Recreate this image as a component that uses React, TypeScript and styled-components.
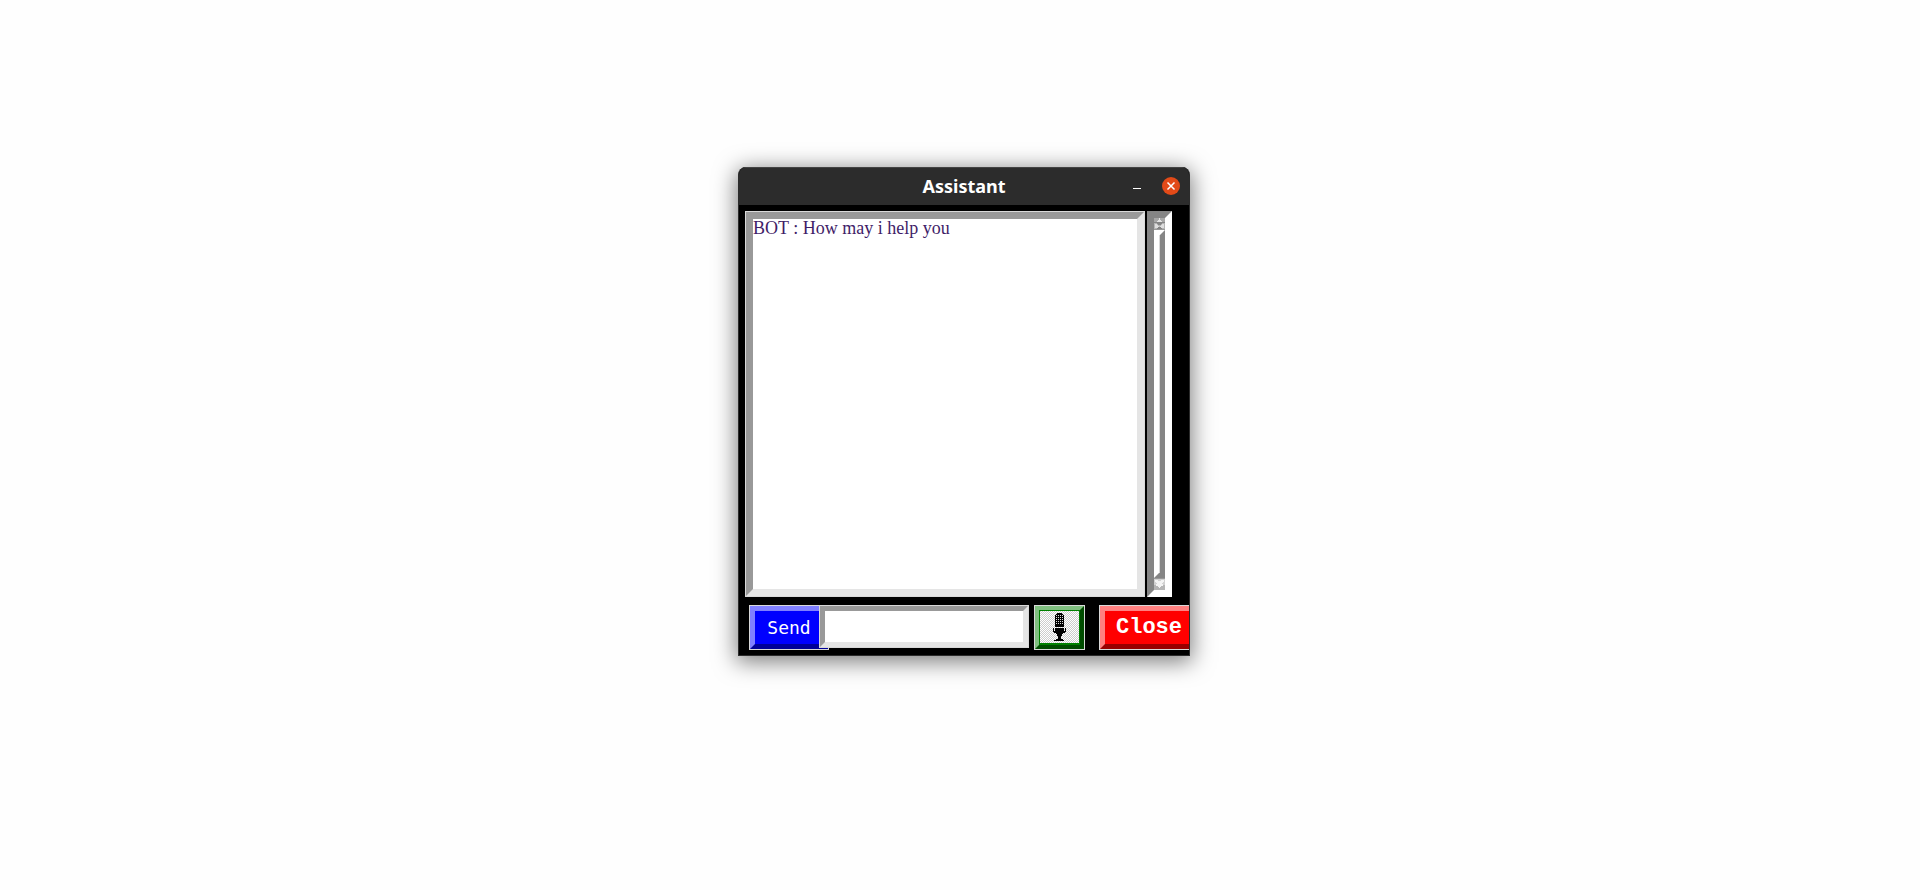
import React, { useState } from "react";
import styled, { createGlobalStyle } from "styled-components";

const GlobalStyle = createGlobalStyle`
  body {
    margin: 0;
    background: #fefefe;
  }
  *, *::before, *::after {
    box-sizing: border-box;
  }
`;

const HIGHLIGHT = "#d9d9d9";

const Desktop = styled.main`
  display: flex;
  justify-content: center;
  padding: 167px 0 40px 8px;
`;

const Window = styled.section`
  width: 452px;
  overflow: hidden;
  border: 1px solid #2c2c2c;
  border-top: 0;
  border-radius: 8px 8px 0 0;
  background: #000;
  box-shadow: 0 4px 22px 2px rgba(0, 0, 0, 0.5);
`;

const TitleBar = styled.header`
  display: grid;
  grid-template-columns: 1fr auto 1fr;
  align-items: center;
  height: 38px;
  padding: 0 9px;
  background: #2c2c2c;
  box-shadow: inset 0 1px 0 #444;
`;

const Title = styled.h1`
  grid-column: 2;
  margin: 0;
  color: #fff;
  font: 700 18px/24px "Noto Sans", "Open Sans", sans-serif;
`;

const WindowControls = styled.div`
  display: flex;
  justify-content: flex-end;
  gap: 16px;
`;

const ControlButton = styled.button<{ $color?: string }>`
  width: 18px;
  height: 18px;
  padding: 0;
  border: 0;
  border-radius: 50%;
  background: ${(p) => p.$color ?? "transparent"};
  svg {
    display: block;
  }
`;

const Content = styled.div`
  display: flex;
  flex-direction: column;
  gap: 8px;
  padding: 6px 0 5px 6px;
`;

const ChatRow = styled.div`
  display: flex;
  gap: 2px;
`;

const ChatFrame = styled.div`
  width: 400px;
  height: 386px;
  padding: 1px;
  background: ${HIGHLIGHT};
`;

const ChatLog = styled.div`
  height: 100%;
  border: 7px solid;
  border-color: #999 #e5e5e5 #e5e5e5 #999;
  background: #fff;
  color: #3f1d68;
  font: 400 18px/18px "Liberation Serif", serif;
`;

const Message = styled.p`
  margin: 0;
`;

const ScrollTrack = styled.div`
  display: flex;
  flex-direction: column;
  width: 25px;
  border: 7px solid;
  border-color: #858585 #fff #fff #858585;
  background: #c3c3c3;
`;

const ScrollArrow = styled.button`
  height: 12px;
  padding: 0;
  border: 0;
  background: #a8a8a8;
  svg {
    display: block;
  }
`;

const ScrollThumb = styled.div`
  flex: 1;
  border: 5px solid;
  border-color: #fff #858585 #858585 #fff;
  background: #d9d9d9;
`;

const ActionRow = styled.form`
  display: flex;
  align-items: flex-start;
  padding-left: 4px;
`;

const ButtonFrame = styled.div<{ $width: number }>`
  flex: none;
  width: ${(p) => p.$width}px;
  height: 45px;
  padding: 1px;
  background: ${HIGHLIGHT};
`;

const BevelButton = styled.button<{ $face: string; $light: string; $dark: string; $bevel: number }>`
  display: block;
  width: 100%;
  height: 100%;
  padding: 0;
  border: ${(p) => p.$bevel}px solid;
  border-color: ${(p) => `${p.$light} ${p.$dark} ${p.$dark} ${p.$light}`};
  background: ${(p) => p.$face};
  color: #fff;
`;

const SendButton = styled(BevelButton)`
  font: 400 18px/24px "DejaVu Sans Mono", monospace;
`;

const CloseButton = styled(BevelButton)`
  font: 700 22px/24px "Liberation Mono", monospace;
`;

const MicButton = styled(BevelButton)`
  padding: 1px 1px 2px;
  svg {
    display: block;
  }
`;

const EntryFrame = styled.div`
  position: relative;
  flex: none;
  width: 210px;
  height: 43px;
  margin: 0 5px 0 -10px;
  padding: 1px;
  background: ${HIGHLIGHT};
`;

const Entry = styled.input`
  display: block;
  width: 100%;
  height: 100%;
  padding: 0 2px;
  border: 5px solid;
  border-color: #999 #e5e5e5 #e5e5e5 #999;
  border-radius: 0;
  outline: 0;
  background: #fff;
  color: #3f1d68;
  font: 400 18px/24px "Liberation Serif", serif;
`;

const CloseSlot = styled.div`
  flex: none;
  margin-left: 14px;
`;

const ArrowUp = () => (
  <svg width="11" height="12" viewBox="0 0 11 12" shapeRendering="crispEdges" aria-hidden="true">
    <path d="M5 0h1v2h1v1h1v1H3V3h1V2h1z" fill="#e4e4e4" />
    <path d="M0 4h11v1H0z" fill="#858585" />
    <path d="M0 5h11v6H0z" fill="#b5b5b5" />
    <path d="M1 6h2v1h1v1h1v1H4v1H1zM10 6H8v1H7v1H6v1h1v1h3z" fill="#dedede" />
    <path d="M3 5h5v1H7v1H4V6H3zM4 9h3v1h1v1H3v-1h1z" fill="#858585" />
    <path d="M0 11h11v1H0z" fill="#999" />
  </svg>
);

const ArrowDown = () => (
  <svg width="11" height="12" viewBox="0 0 11 12" shapeRendering="crispEdges" aria-hidden="true">
    <path d="M0 0h11v1H0z" fill="#999" />
    <path d="M0 1h11v6H0z" fill="#d2d2d2" />
    <path d="M0 7h11v5H0z" fill="#b5b5b5" />
    <path d="M1 2h3v1h3V2h3v2H9v1H8v1h1v2H7v1H6v1H5V9H4V8H2V6h1V5H2V4H1z" fill="#f4f4f4" />
  </svg>
);

const MicIcon = () => (
  <svg width="39" height="32" viewBox="0 0 39 32" aria-hidden="true">
    <defs>
      <pattern id="checks" width="2" height="2" patternUnits="userSpaceOnUse">
        <rect width="2" height="2" fill="#fff" />
        <path d="M0 0h1v1H0zM1 1h1v1H1z" fill="#ccc" />
      </pattern>
      <pattern id="mesh" x="16" y="4" width="2" height="2" patternUnits="userSpaceOnUse">
        <rect width="2" height="2" fill="#000" />
        <rect width="1" height="1" fill="#ddd" />
      </pattern>
    </defs>
    <g shapeRendering="crispEdges">
      <rect width="39" height="32" fill="url(#checks)" />
      <path d="M17 2h5v1h1v1h1v12H15V4h1V3h1z" fill="#000" />
      <path d="M16 4h7v10h-7z" fill="url(#mesh)" />
      <path d="M15 17h9v5h-1v1h-1v1h-5v-1h-1v-1h-1z" fill="#000" />
      <path d="M13 17h1v3h1v2h-1v-1h-1zM26 17h-1v3h-1v2h1v-1h1z" fill="#000" />
      <path d="M17 24h5v1h-1v3h2v1h1v1H14v-1h2v-1h2v-3h-1z" fill="#000" />
    </g>
  </svg>
);

export default function App() {
  const [text, setText] = useState("");

  return (
    <>
      <GlobalStyle />
      <Desktop>
        <Window aria-labelledby="window-title">
          <TitleBar>
            <Title id="window-title">Assistant</Title>
            <WindowControls>
              <ControlButton type="button" aria-label="Minimize">
                <svg width="18" height="18" viewBox="0 0 18 18">
                  <path d="M5 11h8v1H5z" fill="#fff" />
                </svg>
              </ControlButton>
              <ControlButton type="button" aria-label="Close window" $color="#e24a18">
                <svg width="18" height="18" viewBox="0 0 18 18">
                  <path d="M5.5 5.5l7 7M12.5 5.5l-7 7" stroke="#fff" strokeWidth="1.5" />
                </svg>
              </ControlButton>
            </WindowControls>
          </TitleBar>
          <Content>
            <ChatRow>
              <ChatFrame>
                <ChatLog role="log">
                  <Message>BOT : How may i help you</Message>
                </ChatLog>
              </ChatFrame>
              <ScrollTrack>
                <ScrollArrow type="button" aria-label="Scroll up">
                  <ArrowUp />
                </ScrollArrow>
                <ScrollThumb />
                <ScrollArrow type="button" aria-label="Scroll down">
                  <ArrowDown />
                </ScrollArrow>
              </ScrollTrack>
            </ChatRow>
            <ActionRow onSubmit={(e) => e.preventDefault()}>
              <ButtonFrame $width={80}>
                <SendButton type="submit" $face="#0000ff" $light="#8080ff" $dark="#000099" $bevel={5}>
                  Send
                </SendButton>
              </ButtonFrame>
              <EntryFrame>
                <Entry aria-label="Message" value={text} onChange={(e) => setText(e.target.value)} />
              </EntryFrame>
              <ButtonFrame $width={51}>
                <MicButton
                  type="button"
                  aria-label="Speak"
                  $face="#008000"
                  $light="#7fbf7f"
                  $dark="#004c00"
                  $bevel={4}
                >
                  <MicIcon />
                </MicButton>
              </ButtonFrame>
              <CloseSlot>
                <ButtonFrame $width={100}>
                  <CloseButton type="button" $face="#ff0000" $light="#ff8080" $dark="#990000" $bevel={5}>
                    Close
                  </CloseButton>
                </ButtonFrame>
              </CloseSlot>
            </ActionRow>
          </Content>
        </Window>
      </Desktop>
    </>
  );
}
